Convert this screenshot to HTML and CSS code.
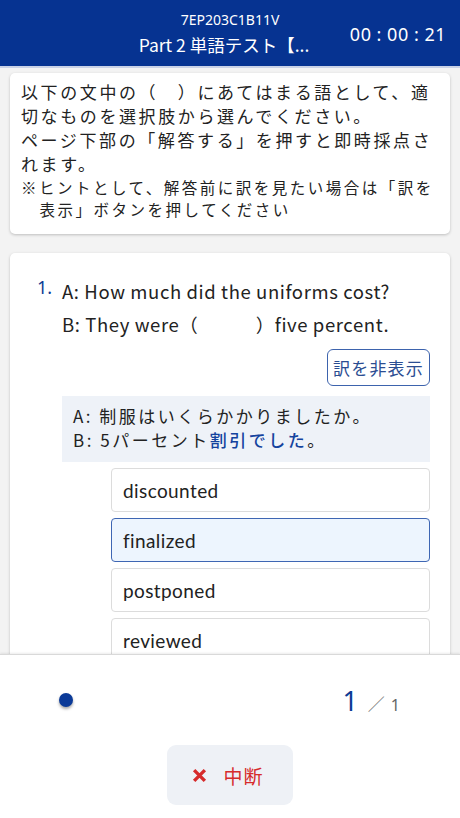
FILE: index.html
```html
<!DOCTYPE html>
<html lang="ja">
<head>
<meta charset="utf-8">
<link rel="stylesheet" href="styles.css">
</head>
<body>
<div class="app">
  <header class="header">
    <div class="title-block">
      <div class="code">7EP203C1B11V</div>
      <div class="title">Part 2 単語テスト【...</div>
    </div>
    <div class="timer">00 : 00 : 21</div>
  </header>
  <main class="main">
    <section class="card intro">
      <p class="lead">以下の文中の（　）にあてはまる語として、適切なものを選択肢から選んでください。<br>ページ下部の「解答する」を押すと即時採点されます。</p>
      <p class="hint">※ヒントとして、解答前に訳を見たい場合は「訳を表示」ボタンを押してください</p>
    </section>
    <section class="card question">
      <div class="qnum">1.</div>
      <div class="qbody">
        <div class="qline">A: How much did the uniforms cost?</div>
        <div class="qline">B: They were（　　　）five percent.</div>
        <div class="btn-row"><button class="toggle">訳を非表示</button></div>
        <div class="trans">
          <div>A: 制服はいくらかかりましたか。</div>
          <div>B: 5パーセント<span class="hl">割引でした</span>。</div>
        </div>
        <div class="options">
          <div class="opt">discounted</div>
          <div class="opt selected">finalized</div>
          <div class="opt">postponed</div>
          <div class="opt">reviewed</div>
        </div>
      </div>
    </section>
  </main>
  <footer class="footer">
    <div class="pager">
      <span class="dot"></span>
      <div class="count"><span class="cur">1</span><span class="sep">／</span><span class="tot">1</span></div>
    </div>
    <div class="stop-row">
      <button class="stop">
        <svg width="15" height="15" viewBox="0 0 14 14"><path d="M2 2 L12 12 M12 2 L2 12" stroke="#d62b2b" stroke-width="3.2" stroke-linecap="butt"/></svg>
        <span>中断</span>
      </button>
    </div>
  </footer>
</div>
</body>
</html>
```
FILE: styles.css
```css
* { box-sizing: border-box; }
html, body { margin: 0; padding: 0; }
body {
  width: 460px;
  height: 818px;
  overflow: hidden;
  font-family: "Noto Sans CJK JP", "Noto Sans", sans-serif;
  color: #222;
  background: #f3f3f3;
}
.app {
  display: flex;
  flex-direction: column;
  height: 818px;
}
.header {
  height: 68px;
  flex: none;
  background: #063391;
  border-bottom: 2px solid #c9d2e6;
  color: #fff;
  display: flex;
  align-items: center;
  position: relative;
}
.title-block {
  flex: 1;
  display: flex;
  flex-direction: column;
  align-items: center;
  padding-right: 12px;
}
.code {
  font-family: "Noto Sans", sans-serif;
  font-size: 14px;
  line-height: 18px;
  margin-top: 2px;
  padding-left: 12px;
}
.title {
  font-size: 17.5px;
  line-height: 26px;
  margin-top: 3px;
}
.timer {
  position: absolute;
  right: 14px;
  top: 22px;
  font-family: "Noto Sans", sans-serif;
  font-size: 18px;
  letter-spacing: 0.5px;
}
.main {
  flex: 1;
  overflow: hidden;
  padding: 5px 10px 0;
  display: flex;
  flex-direction: column;
  gap: 19px;
}
.card {
  background: #fff;
  border-radius: 5px;
  box-shadow: 0 1px 3px rgba(0,0,0,0.22);
}
.intro {
  padding: 7px 10px 14px 11px;
}
.lead {
  margin: 0;
  font-size: 17px;
  line-height: 24px;
  letter-spacing: 2.6px;
}
.hint {
  margin: 0;
  font-size: 15.5px;
  line-height: 22px;
  letter-spacing: 2.5px;
  padding-left: 1.2em;
  text-indent: -1.2em;
}
.question {
  flex: none;
  display: flex;
  padding: 22px 20px 30px 27px;
}
.qnum {
  width: 25px;
  flex: none;
  color: #0c3a94;
  font-family: "Noto Sans", sans-serif;
  font-size: 18px;
  line-height: 24px;
}
.qbody {
  flex: 1;
  display: flex;
  flex-direction: column;
}
.qline {
  font-size: 18.5px;
  line-height: 33px;
  letter-spacing: 0.6px;
}
.btn-row {
  display: flex;
  justify-content: flex-end;
  margin-top: 8px;
}
.toggle {
  width: 103px;
  height: 37px;
  border: 1px solid #3d63ad;
  border-radius: 6px;
  background: #fff;
  color: #2b4d92;
  font-family: "Noto Sans CJK JP", sans-serif;
  font-size: 17px;
  letter-spacing: 1.2px;
  padding: 0;
}
.trans {
  margin-top: 10px;
  background: #eef2f8;
  padding: 8px 11px 10px;
  font-size: 17px;
  line-height: 24px;
  letter-spacing: 2.5px;
}
.hl { color: #14439e; font-weight: 500; }
.options {
  margin-top: 6px;
  margin-left: 49px;
  display: flex;
  flex-direction: column;
  gap: 6px;
}
.opt {
  height: 44px;
  border: 1px solid #dcdcdc;
  border-radius: 4px;
  background: #fff;
  padding-left: 11px;
  display: flex;
  align-items: center;
  font-family: "Lato", "Noto Sans", sans-serif;
  font-size: 19px;
  letter-spacing: 0.4px;
}
.opt.selected {
  background: #edf5fe;
  border-color: #3e66b3;
}
.footer {
  height: 164px;
  flex: none;
  background: #fff;
  border-top: 1px solid #d9d9d9;
  box-shadow: 0 -1px 2px rgba(0,0,0,0.08);
  display: flex;
  flex-direction: column;
  position: relative;
}
.pager {
  height: 90px;
  display: flex;
  align-items: center;
  justify-content: space-between;
  padding: 0 60px 0 59px;
}
.dot {
  width: 14px;
  height: 14px;
  border-radius: 50%;
  background: #0b3a98;
  box-shadow: 0 2px 3px rgba(0,0,0,0.35);
}
.count {
  display: flex;
  align-items: baseline;
  font-family: "Noto Sans", sans-serif;
}
.cur {
  color: #0c3a94;
  font-size: 27px;
}
.sep {
  color: #777;
  font-size: 17px;
  margin: 0 6px 0 10px;
  font-family: "Noto Sans CJK JP", sans-serif;
}
.tot {
  color: #666;
  font-size: 16px;
}
.stop-row {
  display: flex;
  justify-content: center;
}
.stop {
  width: 126px;
  height: 60px;
  border: none;
  border-radius: 9px;
  background: #eef1f6;
  display: flex;
  align-items: center;
  justify-content: center;
  gap: 16px;
  color: #d62b2b;
  font-family: "Noto Sans CJK JP", sans-serif;
  font-size: 19px;
  letter-spacing: 1px;
  padding: 0 4px 0 0;
}
```
